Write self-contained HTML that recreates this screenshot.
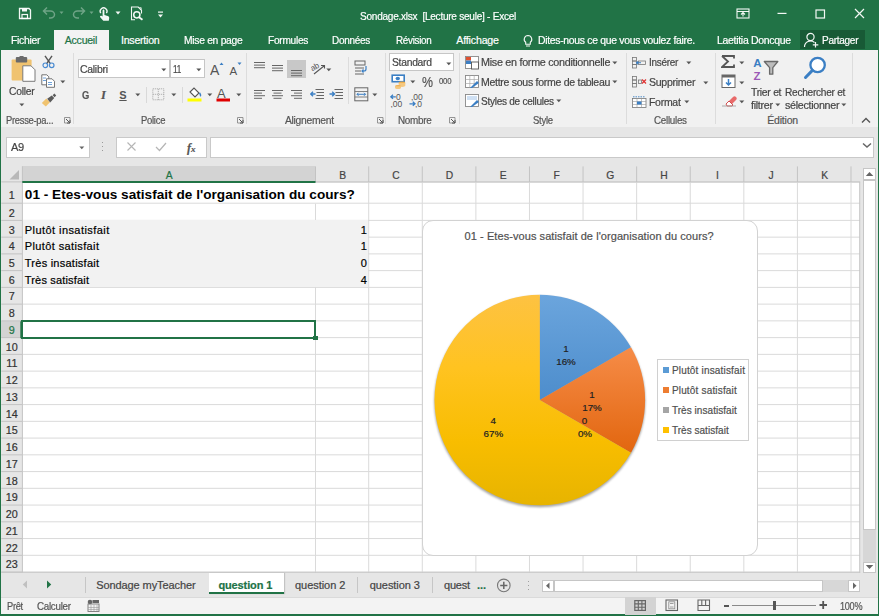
<!DOCTYPE html>
<html><head><meta charset="utf-8"><style>
*{margin:0;padding:0}
html,body{width:879px;height:616px;overflow:hidden;background:#217346;font-family:"Liberation Sans",sans-serif;}
.r{position:absolute;display:block}
.t{position:absolute;white-space:nowrap;font-family:"Liberation Sans",sans-serif;-webkit-text-stroke:0.2px currentColor;}
</style></head><body>
<svg class="r" style="left:18px;top:7px;" width="14" height="13" viewBox="0 0 14 13"><path d="M1.5 1.5h9.5l1.5 1.5v8.5h-11z" fill="none" stroke="rgba(255,255,255,0.95)" stroke-width="1.3"></path><rect x="4" y="1.5" width="5" height="3" fill="rgba(255,255,255,0.95)"></rect><rect x="4" y="7.5" width="5.5" height="4" fill="none" stroke="rgba(255,255,255,0.95)" stroke-width="1.2"></rect></svg>
<svg class="r" style="left:41px;top:4px;" width="16" height="17" viewBox="0 0 16 17"><path d="M6 3.5 L2.5 7 L6 10.5 M3 7 H9.5 A4 3.5 0 0 1 9.5 14 H8" fill="none" stroke="rgba(255,255,255,0.35)" stroke-width="1.5"></path></svg>
<svg class="r" style="left:59px;top:11px;" width="6" height="4" viewBox="0 0 6 4"><path d="M0.5 0.5h4l-2 2.5z" fill="rgba(255,255,255,0.35)"></path></svg>
<svg class="r" style="left:71px;top:4px;" width="16" height="17" viewBox="0 0 16 17"><path d="M10 3.5 L13.5 7 L10 10.5 M13 7 H6.5 A4 3.5 0 0 0 6.5 14 H8" fill="none" stroke="rgba(255,255,255,0.35)" stroke-width="1.5"></path></svg>
<svg class="r" style="left:89px;top:11px;" width="6" height="4" viewBox="0 0 6 4"><path d="M0.5 0.5h4l-2 2.5z" fill="rgba(255,255,255,0.35)"></path></svg>
<svg class="r" style="left:98px;top:5px;" width="13" height="16" viewBox="0 0 13 16"><path d="M2.8 8.2a3.4 3.4 0 1 1 5.6 0" fill="none" stroke="rgba(255,255,255,0.95)" stroke-width="1.3"></path><path d="M4.6 5.5c0-1.2 1.8-1.2 1.8 0v4.5l3.3 0.9c1 0.3 1.6 1 1.5 2l-0.4 2.8H5.3L2.2 12.2c-0.7-0.9 0.3-2 1.3-1.4l1.1 0.7z" fill="rgba(255,255,255,0.95)"></path></svg>
<svg class="r" style="left:115px;top:11px;" width="6" height="4" viewBox="0 0 6 4"><path d="M0.5 0.5h5l-2.5 3z" fill="rgba(255,255,255,0.95)"></path></svg>
<svg class="r" style="left:130px;top:6px;" width="15" height="15" viewBox="0 0 15 15"><path d="M5 13.8 H1.5 V1 H8.2 L11.5 4.3 V7.5" fill="none" stroke="rgba(255,255,255,0.95)" stroke-width="1.1"></path><path d="M9.5 1.5l1.8 0.3-0.3 1.8" fill="none" stroke="rgba(255,255,255,0.95)" stroke-width="0.8"></path><circle cx="6.8" cy="8.8" r="3.1" fill="none" stroke="rgba(255,255,255,0.95)" stroke-width="1.5"></circle><path d="M9 11.2l3.5 2.6" stroke="rgba(255,255,255,0.95)" stroke-width="1.8"></path></svg>
<svg class="r" style="left:157px;top:11px;" width="8" height="8" viewBox="0 0 8 8"><rect x="1" y="0.5" width="5" height="1.2" fill="rgba(255,255,255,0.95)"></rect><path d="M1 3.5h5l-2.5 3z" fill="rgba(255,255,255,0.95)"></path></svg>
<div class="t" style="left: 360px; top: 11.17px; font-size: 11.5px; line-height: 11.5px; color: rgb(255, 255, 255); letter-spacing: -0.3px; transform: scaleX(0.876); transform-origin: 0px 0px;">Sondage.xlsx&nbsp;&nbsp;[Lecture seule] - Excel</div>
<svg class="r" style="left:736px;top:8px;" width="14" height="11" viewBox="0 0 14 11"><rect x="1" y="1" width="12" height="9" fill="none" stroke="rgba(255,255,255,0.95)" stroke-width="1.1"></rect><path d="M1 3.5h12" stroke="rgba(255,255,255,0.95)" stroke-width="1"></path><path d="M7 4.5v4M5 6.5l2-2 2 2" fill="none" stroke="rgba(255,255,255,0.95)" stroke-width="1.1"></path></svg>
<svg class="r" style="left:777px;top:12px;" width="10" height="3" viewBox="0 0 10 3"><rect x="0.5" y="0.8" width="9" height="1.2" fill="rgba(255,255,255,0.95)"></rect></svg>
<svg class="r" style="left:815px;top:9px;" width="11" height="10" viewBox="0 0 11 10"><rect x="1" y="1" width="8.5" height="8" fill="none" stroke="rgba(255,255,255,0.95)" stroke-width="1.2"></rect></svg>
<svg class="r" style="left:854px;top:8px;" width="11" height="11" viewBox="0 0 11 11"><path d="M1 1L10 10M10 1L1 10" stroke="rgba(255,255,255,0.95)" stroke-width="1.2"></path></svg>
<div class="r" style="left:53.60px;top:30.00px;width:55.60px;height:20.00px;background:#f3f3f3;"></div>
<div class="t" style="left: 10.9px; top: 35.03px; font-size: 10.6px; line-height: 10.6px; color: rgb(255, 255, 255); letter-spacing: -0.3px; transform: scaleX(0.9804); transform-origin: 0px 0px;">Fichier</div>
<div class="t" style="left: 64.8px; top: 35.03px; font-size: 10.6px; line-height: 10.6px; color: rgb(33, 115, 70); letter-spacing: -0.276px;">Accueil</div>
<div class="t" style="left: 121px; top: 35.03px; font-size: 10.6px; line-height: 10.6px; color: rgb(255, 255, 255); letter-spacing: -0.243px;">Insertion</div>
<div class="t" style="left: 184.3px; top: 35.03px; font-size: 10.6px; line-height: 10.6px; color: rgb(255, 255, 255); letter-spacing: -0.3px; transform: scaleX(0.9732); transform-origin: 0px 0px;">Mise en page</div>
<div class="t" style="left: 267.6px; top: 35.03px; font-size: 10.6px; line-height: 10.6px; color: rgb(255, 255, 255); letter-spacing: -0.3px; transform: scaleX(0.9608); transform-origin: 0px 0px;">Formules</div>
<div class="t" style="left: 332.4px; top: 35.03px; font-size: 10.6px; line-height: 10.6px; color: rgb(255, 255, 255); letter-spacing: -0.3px; transform: scaleX(0.9406); transform-origin: 0px 0px;">Données</div>
<div class="t" style="left: 395.6px; top: 35.03px; font-size: 10.6px; line-height: 10.6px; color: rgb(255, 255, 255); letter-spacing: -0.3px; transform: scaleX(0.929); transform-origin: 0px 0px;">Révision</div>
<div class="t" style="left: 456.3px; top: 35.03px; font-size: 10.6px; line-height: 10.6px; color: rgb(255, 255, 255); letter-spacing: -0.161px;">Affichage</div>
<svg class="r" style="left:522px;top:34px;" width="12" height="13" viewBox="0 0 12 13"><path d="M6 1.5a3.8 3.8 0 0 0-2.3 6.8v2h4.6v-2A3.8 3.8 0 0 0 6 1.5z" fill="none" stroke="rgba(255,255,255,0.95)" stroke-width="1.1"></path><path d="M4 12h4" stroke="rgba(255,255,255,0.95)" stroke-width="1"></path></svg>
<div class="t" style="left: 537.9px; top: 35.03px; font-size: 10.6px; line-height: 10.6px; color: rgb(255, 255, 255); letter-spacing: -0.3px; transform: scaleX(0.9802); transform-origin: 0px 0px;">Dites-nous ce que vous voulez faire.</div>
<div class="t" style="left: 716.7px; top: 35.03px; font-size: 10.6px; line-height: 10.6px; color: rgb(255, 255, 255); letter-spacing: -0.3px; transform: scaleX(0.9891); transform-origin: 0px 0px;">Laetitia Doncque</div>
<div class="r" style="left:799.70px;top:30.10px;width:65.00px;height:19.40px;background:#185a36;"></div>
<svg class="r" style="left:803px;top:32px;" width="17" height="16" viewBox="0 0 17 16"><circle cx="7.5" cy="5" r="3.6" fill="none" stroke="rgba(255,255,255,0.95)" stroke-width="1.2"></circle><path d="M1.5 15a6 6 0 0 1 10-4.5" fill="none" stroke="rgba(255,255,255,0.95)" stroke-width="1.2"></path><path d="M12.5 10v5.5M9.8 12.8h5.5" stroke="rgba(255,255,255,0.95)" stroke-width="1.2"></path></svg>
<div class="t" style="left: 821.5px; top: 35.03px; font-size: 10.6px; line-height: 10.6px; color: rgb(255, 255, 255); letter-spacing: -0.3px; transform: scaleX(0.9472); transform-origin: 0px 0px;">Partager</div>
<div class="r" style="left:1.30px;top:50.00px;width:876.40px;height:77.30px;background:#f1f1f1;"></div>
<div class="r" style="left:1.30px;top:126.80px;width:876.40px;height:1.00px;background:#dadada;"></div>
<div class="r" style="left:73.00px;top:53.00px;width:1.00px;height:71.00px;background:#dcdcdc;"></div>
<div class="r" style="left:246.00px;top:53.00px;width:1.00px;height:71.00px;background:#dcdcdc;"></div>
<div class="r" style="left:384.50px;top:53.00px;width:1.00px;height:71.00px;background:#dcdcdc;"></div>
<div class="r" style="left:458.50px;top:53.00px;width:1.00px;height:71.00px;background:#dcdcdc;"></div>
<div class="r" style="left:626.00px;top:53.00px;width:1.00px;height:71.00px;background:#dcdcdc;"></div>
<div class="r" style="left:715.30px;top:53.00px;width:1.00px;height:71.00px;background:#dcdcdc;"></div>
<div class="r" style="left:851.50px;top:53.00px;width:1.00px;height:71.00px;background:#dcdcdc;"></div>
<div class="r" style="left:347.80px;top:57.00px;width:1.00px;height:47.00px;background:#dcdcdc;"></div>
<div class="t" style="left: 6.3px; top: 115.11px; font-size: 10.5px; line-height: 10.5px; color: rgb(85, 85, 85); letter-spacing: -0.3px; transform: scaleX(0.8909); transform-origin: 0px 0px;">Presse-pa...</div>
<div class="t" style="left: 140.6px; top: 115.11px; font-size: 10.5px; line-height: 10.5px; color: rgb(85, 85, 85); letter-spacing: -0.3px; transform: scaleX(0.9); transform-origin: 0px 0px;">Police</div>
<div class="t" style="left: 285px; top: 115.11px; font-size: 10.5px; line-height: 10.5px; color: rgb(85, 85, 85); letter-spacing: -0.3px; transform: scaleX(0.9833); transform-origin: 0px 0px;">Alignement</div>
<div class="t" style="left: 397.7px; top: 115.11px; font-size: 10.5px; line-height: 10.5px; color: rgb(85, 85, 85); letter-spacing: -0.3px; transform: scaleX(0.9429); transform-origin: 0px 0px;">Nombre</div>
<div class="t" style="left: 532.6px; top: 115.11px; font-size: 10.5px; line-height: 10.5px; color: rgb(85, 85, 85); letter-spacing: -0.3px; transform: scaleX(0.9032); transform-origin: 0px 0px;">Style</div>
<div class="t" style="left: 654px; top: 115.11px; font-size: 10.5px; line-height: 10.5px; color: rgb(85, 85, 85); letter-spacing: -0.3px; transform: scaleX(0.9361); transform-origin: 0px 0px;">Cellules</div>
<div class="t" style="left: 767.3px; top: 115.11px; font-size: 10.5px; line-height: 10.5px; color: rgb(85, 85, 85); letter-spacing: -0.202px;">Édition</div>
<svg class="r" style="left:63.5px;top:117px;" width="7" height="7" viewBox="0 0 7 7"><path d="M0.5 0.5h5.5v5.5h-5.5z" fill="none" stroke="#8a8a8a" stroke-width="0.9"></path><path d="M2 2l4 4M6 3v3h-3" fill="none" stroke="#555" stroke-width="1"></path></svg>
<svg class="r" style="left:236.5px;top:117px;" width="7" height="7" viewBox="0 0 7 7"><path d="M0.5 0.5h5.5v5.5h-5.5z" fill="none" stroke="#8a8a8a" stroke-width="0.9"></path><path d="M2 2l4 4M6 3v3h-3" fill="none" stroke="#555" stroke-width="1"></path></svg>
<svg class="r" style="left:376.5px;top:117px;" width="7" height="7" viewBox="0 0 7 7"><path d="M0.5 0.5h5.5v5.5h-5.5z" fill="none" stroke="#8a8a8a" stroke-width="0.9"></path><path d="M2 2l4 4M6 3v3h-3" fill="none" stroke="#555" stroke-width="1"></path></svg>
<svg class="r" style="left:448.5px;top:117px;" width="7" height="7" viewBox="0 0 7 7"><path d="M0.5 0.5h5.5v5.5h-5.5z" fill="none" stroke="#8a8a8a" stroke-width="0.9"></path><path d="M2 2l4 4M6 3v3h-3" fill="none" stroke="#555" stroke-width="1"></path></svg>
<svg class="r" style="left:861px;top:117px;" width="10" height="7" viewBox="0 0 10 7"><path d="M1 5.5l4-4 4 4" fill="none" stroke="#555" stroke-width="1.4"></path></svg>
<svg class="r" style="left:11px;top:56px;" width="26" height="27" viewBox="0 0 26 27"><rect x="0.6" y="3.5" width="20" height="21" rx="1" fill="#f0c370"></rect><rect x="4.8" y="1" width="11.4" height="5.5" rx="1" fill="#6b6b6b"></rect><rect x="8.3" y="0" width="4.5" height="2.5" rx="1" fill="#6b6b6b"></rect><path d="M11.8 9.8h8.2l4 4v11.5h-12.2z" fill="#fff" stroke="#7a7a7a" stroke-width="1"></path></svg>
<div class="t" style="left: 8.6px; top: 85.82px; font-size: 11.2px; line-height: 11.2px; color: rgb(68, 68, 68); letter-spacing: -0.3px; transform: scaleX(0.9235); transform-origin: 0px 0px;">Coller</div>
<svg class="r" style="left:18.8px;top:103px;" width="6" height="4" viewBox="0 0 6 4"><path d="M0.3 0.5h5l-2.5 2.8z" fill="#555"></path></svg>
<svg class="r" style="left:41px;top:55px;" width="15" height="14" viewBox="0 0 15 14"><path d="M4 0.8l5.5 8M11 0.8l-5.5 8" stroke="#555" stroke-width="1.4"></path><circle cx="4.3" cy="10.3" r="2.3" fill="none" stroke="#4a8bd1" stroke-width="1.2"></circle><circle cx="10.7" cy="10.3" r="2.3" fill="none" stroke="#4a8bd1" stroke-width="1.2"></circle></svg>
<svg class="r" style="left:41px;top:74px;" width="15" height="14" viewBox="0 0 15 14"><path d="M0.8 0.8h5l2 2v8h-7z" fill="#fff" stroke="#666" stroke-width="0.9"></path><path d="M5.5 4.8h5.5l2.5 2.5v6h-8z" fill="#fff" stroke="#666" stroke-width="0.9"></path><path d="M2 4h3M2 6.5h3M7 8.5h4M7 10.5h4" stroke="#4a8bd1" stroke-width="0.8"></path></svg>
<svg class="r" style="left:60px;top:80px;" width="6" height="4" viewBox="0 0 6 4"><path d="M0.3 0.5h5l-2.5 2.8z" fill="#555"></path></svg>
<svg class="r" style="left:41px;top:93px;" width="16" height="14" viewBox="0 0 16 14"><path d="M0.8 10 L5.3 5.6 L9 9.3 L4.8 13.6 Z" fill="#f0c370"></path><path d="M6.2 5.8 L10.8 2.6 L13.2 5 L9.2 9.5 Z" fill="#5a5a5a"></path><path d="M11.6 2.2 L13.4 0.6 L15.2 2.4 L13.6 4.2Z" fill="#5a5a5a"></path></svg>
<div class="r" style="left:77.60px;top:59.20px;width:92.40px;height:19.10px;background:#fff;box-sizing:border-box;border:1px solid #c6c6c6;"></div>
<div class="r" style="left:170.30px;top:59.20px;width:35.00px;height:19.10px;background:#fff;box-sizing:border-box;border:1px solid #c6c6c6;"></div>
<div class="t" style="left: 79.8px; top: 64.09px; font-size: 11px; line-height: 11px; color: rgb(68, 68, 68); letter-spacing: -0.3px; transform: scaleX(0.9531); transform-origin: 0px 0px;">Calibri</div>
<svg class="r" style="left:161px;top:67.5px;" width="6" height="4" viewBox="0 0 6 4"><path d="M0.3 0.5h5l-2.5 2.8z" fill="#555"></path></svg>
<div class="t" style="left: 173.4px; top: 64.09px; font-size: 11px; line-height: 11px; color: rgb(68, 68, 68); letter-spacing: -0.3px; transform: scaleX(0.7369); transform-origin: 0px 0px;">11</div>
<svg class="r" style="left:196px;top:67.5px;" width="6" height="4" viewBox="0 0 6 4"><path d="M0.3 0.5h5l-2.5 2.8z" fill="#555"></path></svg>
<svg class="r" style="left:210px;top:61px;" width="14" height="15" viewBox="0 0 14 15"><text x="0" y="13.5" font-family="Liberation Sans" font-size="14" fill="#555">A</text><path d="M9.5 4l2-2.5 2 2.5z" fill="#3b7fc4"></path></svg>
<svg class="r" style="left:229px;top:61px;" width="13" height="15" viewBox="0 0 13 15"><text x="0.5" y="13.5" font-family="Liberation Sans" font-size="11.5" fill="#555">A</text><path d="M8.5 1.5h4l-2 2.5z" fill="#3b7fc4"></path></svg>
<div class="t" style="left: 82px; top: 90.09px; font-size: 11px; line-height: 11px; color: rgb(85, 85, 85); font-weight: bold; transform: scaleX(0.8526); transform-origin: 0px 0px;">G</div>
<div class="t " style="left:101.00px;top:89.12px;font-size:12.5px;line-height:12.5px;color:#555;font-family:'Liberation Serif',serif;font-weight:bold;"><i>I</i></div>
<div class="t " style="left:119.30px;top:90.09px;font-size:11px;line-height:11px;color:#555;font-weight:bold;-webkit-text-stroke:0;"><u>S</u></div>
<svg class="r" style="left:134.5px;top:93px;" width="6" height="4" viewBox="0 0 6 4"><path d="M0.3 0.5h5l-2.5 2.8z" fill="#555"></path></svg>
<div class="r" style="left:145.50px;top:87.00px;width:1.00px;height:16.00px;background:#d9d9d9;"></div>
<svg class="r" style="left:152px;top:88px;" width="13" height="13" viewBox="0 0 13 13"><rect x="0.8" y="0.8" width="11" height="11" fill="none" stroke="#aaa" stroke-width="0.9" stroke-dasharray="1.2 0.8"></rect><path d="M6.3 1v11M1 6.3h11" stroke="#aaa" stroke-width="0.9" stroke-dasharray="1.2 0.8"></path></svg>
<svg class="r" style="left:170.5px;top:93px;" width="6" height="4" viewBox="0 0 6 4"><path d="M0.3 0.5h5l-2.5 2.8z" fill="#555"></path></svg>
<div class="r" style="left:181.50px;top:87.00px;width:1.00px;height:16.00px;background:#d9d9d9;"></div>
<svg class="r" style="left:187px;top:86px;" width="16" height="16" viewBox="0 0 16 16"><path d="M3 6l4-4 5 5-4 4z" fill="#fff" stroke="#555" stroke-width="1.1"></path><path d="M12.5 7c1 1.5 1.5 2.5 0.5 3" fill="none" stroke="#3b7fc4" stroke-width="1.5"></path><rect x="0.5" y="12.5" width="14" height="3" fill="#ffff00"></rect></svg>
<svg class="r" style="left:206.5px;top:93px;" width="6" height="4" viewBox="0 0 6 4"><path d="M0.3 0.5h5l-2.5 2.8z" fill="#555"></path></svg>
<svg class="r" style="left:216px;top:86px;" width="15" height="16" viewBox="0 0 15 16"><text x="1" y="11.5" font-family="Liberation Sans" font-size="13" fill="#555">A</text><rect x="0.5" y="12.5" width="13.5" height="3" fill="#e00000"></rect></svg>
<svg class="r" style="left:235.5px;top:93px;" width="6" height="4" viewBox="0 0 6 4"><path d="M0.3 0.5h5l-2.5 2.8z" fill="#555"></path></svg>
<svg class="r" style="left:254px;top:62px;" width="16" height="16" viewBox="0 0 16 16"><rect x="0" y="0.0" width="11" height="1" fill="#666"></rect><rect x="0" y="2.6" width="11" height="1" fill="#666"></rect><rect x="0" y="5.2" width="11" height="1" fill="#666"></rect></svg>
<svg class="r" style="left:272px;top:65px;" width="16" height="16" viewBox="0 0 16 16"><rect x="0" y="0.0" width="11" height="1" fill="#666"></rect><rect x="0" y="2.6" width="11" height="1" fill="#666"></rect><rect x="0" y="5.2" width="11" height="1" fill="#666"></rect></svg>
<div class="r" style="left:287.00px;top:59.50px;width:18.60px;height:18.80px;background:#c8c8c8;"></div>
<svg class="r" style="left:290.5px;top:69.5px;" width="16" height="16" viewBox="0 0 16 16"><rect x="0" y="0.0" width="11" height="1" fill="#666"></rect><rect x="0" y="2.6" width="11" height="1" fill="#666"></rect><rect x="0" y="5.2" width="11" height="1" fill="#666"></rect></svg>
<svg class="r" style="left:311px;top:60px;" width="22" height="16" viewBox="0 0 22 16"><text x="0" y="9" font-family="Liberation Sans" font-size="8" fill="#555" transform="rotate(-30 5 8)">ab</text><path d="M3 14l10-8M10 5.5h3.5v3" fill="none" stroke="#555" stroke-width="1.1"></path></svg>
<svg class="r" style="left:326px;top:68px;" width="6" height="4" viewBox="0 0 6 4"><path d="M0.3 0.5h5l-2.5 2.8z" fill="#555"></path></svg>
<svg class="r" style="left:254px;top:90px;" width="16" height="16" viewBox="0 0 16 16"><rect x="0" y="0.0" width="11" height="1" fill="#666"></rect><rect x="0" y="2.6" width="8" height="1" fill="#666"></rect><rect x="0" y="5.2" width="11" height="1" fill="#666"></rect><rect x="0" y="7.800000000000001" width="8" height="1" fill="#666"></rect></svg>
<svg class="r" style="left:272px;top:90px;" width="16" height="16" viewBox="0 0 16 16"><rect x="0" y="0.0" width="11" height="1" fill="#666"></rect><rect x="1.5" y="2.6" width="8" height="1" fill="#666"></rect><rect x="0" y="5.2" width="11" height="1" fill="#666"></rect><rect x="1.5" y="7.800000000000001" width="8" height="1" fill="#666"></rect></svg>
<svg class="r" style="left:291px;top:90px;" width="16" height="16" viewBox="0 0 16 16"><rect x="0" y="0.0" width="11" height="1" fill="#666"></rect><rect x="3" y="2.6" width="8" height="1" fill="#666"></rect><rect x="0" y="5.2" width="11" height="1" fill="#666"></rect><rect x="3" y="7.800000000000001" width="8" height="1" fill="#666"></rect></svg>
<svg class="r" style="left:310px;top:89px;" width="15" height="12" viewBox="0 0 15 12"><path d="M5.5 0.5h8.5M6.5 3.5h7.5M6.5 6.5h7.5M5.5 9.5h8.5" stroke="#666" stroke-width="1"></path><path d="M0.5 5h5M3 2.8L0.7 5 3 7.2" fill="none" stroke="#3b7fc4" stroke-width="1.4"></path></svg>
<svg class="r" style="left:329px;top:89px;" width="15" height="12" viewBox="0 0 15 12"><path d="M5.5 0.5h8.5M6.5 3.5h7.5M6.5 6.5h7.5M5.5 9.5h8.5" stroke="#666" stroke-width="1"></path><path d="M0.5 5h5M3.2 2.8L5.5 5 3.2 7.2" fill="none" stroke="#3b7fc4" stroke-width="1.4"></path></svg>
<svg class="r" style="left:354px;top:60px;" width="16" height="16" viewBox="0 0 16 16"><rect x="1" y="1" width="10" height="4" fill="none" stroke="#666" stroke-width="1"></rect><path d="M1 8h9M1 11h6M1 14h9" stroke="#666" stroke-width="1"></path><path d="M12 6v3a2 2 0 0 1-2 2h-2M9.5 9.5l-1.5 1.5 1.5 1.5" fill="none" stroke="#3b7fc4" stroke-width="1.2"></path></svg>
<svg class="r" style="left:354px;top:87px;" width="15" height="15" viewBox="0 0 15 15"><rect x="0.8" y="0.8" width="13" height="13" fill="none" stroke="#666" stroke-width="1"></rect><path d="M0.8 4.5h13M0.8 10h13" stroke="#666" stroke-width="0.8"></path><path d="M3 7.3h8.5M4.5 5.8L3 7.3 4.5 8.8M10 5.8l1.5 1.5L10 8.8" fill="none" stroke="#3b7fc4" stroke-width="1"></path></svg>
<svg class="r" style="left:372px;top:93px;" width="6" height="4" viewBox="0 0 6 4"><path d="M0.3 0.5h5l-2.5 2.8z" fill="#555"></path></svg>
<div class="r" style="left:389.40px;top:53.30px;width:65.10px;height:18.00px;background:#fff;box-sizing:border-box;border:1px solid #c6c6c6;"></div>
<div class="t" style="left: 392px; top: 56.89px; font-size: 11px; line-height: 11px; color: rgb(68, 68, 68); letter-spacing: -0.3px; transform: scaleX(0.9401); transform-origin: 0px 0px;">Standard</div>
<svg class="r" style="left:446px;top:61.5px;" width="6" height="4" viewBox="0 0 6 4"><path d="M0.3 0.5h5l-2.5 2.8z" fill="#555"></path></svg>
<svg class="r" style="left:391px;top:74px;" width="16" height="15" viewBox="0 0 16 15"><rect x="1.2" y="1.2" width="12" height="6.5" fill="#fff" stroke="#3b7fc4" stroke-width="1.6"></rect><ellipse cx="6.8" cy="4.5" rx="2.2" ry="1.8" fill="#3b7fc4"></ellipse><ellipse cx="11" cy="9" rx="3.3" ry="1.4" fill="#f0b050"></ellipse><path d="M7.7 9v2.5a3.3 1.4 0 0 0 6.6 0V9" fill="#f5c880"></path><ellipse cx="7" cy="12.3" rx="3" ry="1.3" fill="#f0b050"></ellipse><path d="M4 12.3v1.5a3 1.3 0 0 0 6 0v-1.5" fill="#f5c880"></path></svg>
<svg class="r" style="left:409.5px;top:79.5px;" width="6" height="4" viewBox="0 0 6 4"><path d="M0.3 0.5h5l-2.5 2.8z" fill="#555"></path></svg>
<div class="t" style="left: 421.5px; top: 75.05px; font-size: 14px; line-height: 14px; color: rgb(85, 85, 85); transform: scaleX(0.8833); transform-origin: 0px 0px;">%</div>
<div class="t" style="left: 439px; top: 76.36px; font-size: 9.5px; line-height: 9.5px; color: rgb(85, 85, 85); letter-spacing: -0.3px; transform: scaleX(0.8195); transform-origin: 0px 0px;">000</div>
<svg class="r" style="left:390px;top:93px;" width="16" height="15" viewBox="0 0 16 15"><text x="6" y="7" font-family="Liberation Sans" font-size="8.5" fill="#555">0</text><text x="0.5" y="14" font-family="Liberation Sans" font-size="8.5" fill="#555">,00</text><path d="M0.8 3.8h5M3 1.8L0.8 3.8 3 5.8" fill="none" stroke="#3b7fc4" stroke-width="1.3"></path></svg>
<svg class="r" style="left:409px;top:93px;" width="16" height="15" viewBox="0 0 16 15"><text x="2" y="7" font-family="Liberation Sans" font-size="8.5" fill="#555">,00</text><text x="6" y="14" font-family="Liberation Sans" font-size="8.5" fill="#555">,0</text><path d="M0.5 10.8h5.5M3.8 8.8L6 10.8 3.8 12.8" fill="none" stroke="#3b7fc4" stroke-width="1.3"></path></svg>
<svg class="r" style="left:464.5px;top:55.5px;" width="15" height="14" viewBox="0 0 15 14"><rect x="0.5" y="0.5" width="13" height="12" fill="#fff" stroke="#888" stroke-width="0.9"></rect><rect x="1" y="1" width="5" height="3.5" fill="#e05030"></rect><rect x="1" y="4.5" width="5" height="3.5" fill="#3b7fc4"></rect><rect x="6.5" y="6" width="7" height="7" fill="#fff" stroke="#555" stroke-width="0.9"></rect></svg>
<svg class="r" style="left:464.5px;top:75px;" width="15" height="14" viewBox="0 0 15 14"><rect x="0.5" y="0.5" width="13" height="12" fill="#fff" stroke="#888" stroke-width="0.9"></rect><path d="M0.5 4.5h13M0.5 8.5h13M4.8 0.5v12M9.2 0.5v12" stroke="#aaa" stroke-width="0.7"></path><path d="M5 13l7-7 2 2-7 5z" fill="#3b7fc4"></path></svg>
<svg class="r" style="left:464.5px;top:94px;" width="15" height="14" viewBox="0 0 15 14"><rect x="0.5" y="0.5" width="13" height="12" fill="#fff" stroke="#888" stroke-width="0.9"></rect><rect x="2" y="2" width="10" height="4" fill="#cfe0f3"></rect><path d="M5 13l7-7 2 2-7 5z" fill="#3b7fc4"></path></svg>
<div class="t" style="left: 480.8px; top: 57.09px; font-size: 11px; line-height: 11px; color: rgb(68, 68, 68); letter-spacing: -0.3px; transform: scaleX(0.9809); transform-origin: 0px 0px;">Mise en forme conditionnelle</div>
<svg class="r" style="left:612px;top:60.5px;" width="6" height="4" viewBox="0 0 6 4"><path d="M0.3 0.5h5l-2.5 2.8z" fill="#555"></path></svg>
<div class="t" style="left: 480.8px; top: 76.59px; font-size: 11px; line-height: 11px; color: rgb(68, 68, 68); letter-spacing: -0.3px; transform: scaleX(0.9586); transform-origin: 0px 0px;">Mettre sous forme de tableau</div>
<svg class="r" style="left:612px;top:80px;" width="6" height="4" viewBox="0 0 6 4"><path d="M0.3 0.5h5l-2.5 2.8z" fill="#555"></path></svg>
<div class="t" style="left: 480.8px; top: 95.59px; font-size: 11px; line-height: 11px; color: rgb(68, 68, 68); letter-spacing: -0.3px; transform: scaleX(0.915); transform-origin: 0px 0px;">Styles de cellules</div>
<svg class="r" style="left:556px;top:99px;" width="6" height="4" viewBox="0 0 6 4"><path d="M0.3 0.5h5l-2.5 2.8z" fill="#555"></path></svg>
<svg class="r" style="left:632.4px;top:56.5px;" width="15" height="12" viewBox="0 0 15 12"><rect x="0.5" y="0.5" width="4" height="3.5" fill="none" stroke="#777" stroke-width="0.8"></rect><rect x="0.5" y="4" width="4" height="3.5" fill="none" stroke="#777" stroke-width="0.8"></rect><rect x="0.5" y="7.5" width="4" height="3.5" fill="none" stroke="#777" stroke-width="0.8"></rect><rect x="6.5" y="4" width="7" height="3.5" fill="none" stroke="#777" stroke-width="0.8"></rect><path d="M4 5.8h5M6 4.3L4.5 5.8 6 7.3" fill="none" stroke="#3b7fc4" stroke-width="1.1"></path></svg>
<svg class="r" style="left:632.4px;top:76px;" width="15" height="12" viewBox="0 0 15 12"><rect x="0.5" y="0.5" width="4" height="3.5" fill="none" stroke="#777" stroke-width="0.8"></rect><rect x="0.5" y="4" width="4" height="3.5" fill="none" stroke="#777" stroke-width="0.8"></rect><rect x="0.5" y="7.5" width="4" height="3.5" fill="none" stroke="#777" stroke-width="0.8"></rect><rect x="6.5" y="4" width="3" height="3.5" fill="none" stroke="#777" stroke-width="0.8"></rect><path d="M10 3.5l4 4M14 3.5l-4 4" stroke="#e03030" stroke-width="1.2"></path></svg>
<svg class="r" style="left:632.4px;top:95.5px;" width="15" height="12" viewBox="0 0 15 12"><rect x="0.5" y="2.5" width="13.5" height="9" fill="#fff" stroke="#777" stroke-width="0.8"></rect><path d="M0.5 5.5h13.5M0.5 8.5h13.5M5 2.5v9M9.5 2.5v9" stroke="#999" stroke-width="0.6"></path><rect x="5" y="5.5" width="4.5" height="3" fill="#3b7fc4"></rect><path d="M1 0.8h12.5" stroke="#3b7fc4" stroke-width="0.9" stroke-dasharray="1.5 1"></path></svg>
<div class="t" style="left: 648.6px; top: 57.39px; font-size: 11px; line-height: 11px; color: rgb(68, 68, 68); letter-spacing: -0.3px; transform: scaleX(0.9063); transform-origin: 0px 0px;">Insérer</div>
<svg class="r" style="left:685.5px;top:61px;" width="6" height="4" viewBox="0 0 6 4"><path d="M0.3 0.5h5l-2.5 2.8z" fill="#555"></path></svg>
<div class="t" style="left: 648.6px; top: 76.79px; font-size: 11px; line-height: 11px; color: rgb(68, 68, 68); letter-spacing: -0.3px; transform: scaleX(0.9597); transform-origin: 0px 0px;">Supprimer</div>
<svg class="r" style="left:702.5px;top:80.5px;" width="6" height="4" viewBox="0 0 6 4"><path d="M0.3 0.5h5l-2.5 2.8z" fill="#555"></path></svg>
<div class="t" style="left: 648.6px; top: 96.59px; font-size: 11px; line-height: 11px; color: rgb(68, 68, 68); letter-spacing: -0.3px; transform: scaleX(0.9536); transform-origin: 0px 0px;">Format</div>
<svg class="r" style="left:683.5px;top:100px;" width="6" height="4" viewBox="0 0 6 4"><path d="M0.3 0.5h5l-2.5 2.8z" fill="#555"></path></svg>
<svg class="r" style="left:721px;top:55px;" width="16" height="14" viewBox="0 0 16 14"><path d="M1 1h12v2.5M1 1l6 5.5L1 12h12v-2.5" fill="none" stroke="#555" stroke-width="1.8"></path></svg>
<svg class="r" style="left:738.5px;top:60.5px;" width="6" height="4" viewBox="0 0 6 4"><path d="M0.3 0.5h5l-2.5 2.8z" fill="#555"></path></svg>
<svg class="r" style="left:721px;top:74px;" width="16" height="15" viewBox="0 0 16 15"><rect x="1" y="1" width="13" height="12.5" fill="#fff" stroke="#666" stroke-width="1"></rect><rect x="1" y="1" width="13" height="2.5" fill="#666"></rect><path d="M7.5 5v6M5 8.5l2.5 2.5 2.5-2.5" fill="none" stroke="#3b7fc4" stroke-width="1.5"></path></svg>
<svg class="r" style="left:739px;top:80.5px;" width="6" height="4" viewBox="0 0 6 4"><path d="M0.3 0.5h5l-2.5 2.8z" fill="#555"></path></svg>
<svg class="r" style="left:721px;top:93px;" width="16" height="14" viewBox="0 0 16 14"><path d="M5 11l7-7c1-1 2-1 3 0s1 2 0 3l-5 5z" fill="#e86a6a"></path><path d="M5 11l3-3 4 4-1 1H6z" fill="#fff" stroke="#d04040" stroke-width="0.9"></path><path d="M1 13h14" stroke="#999" stroke-width="0.8"></path></svg>
<svg class="r" style="left:739px;top:99.5px;" width="6" height="4" viewBox="0 0 6 4"><path d="M0.3 0.5h5l-2.5 2.8z" fill="#555"></path></svg>
<svg class="r" style="left:751px;top:56px;" width="30" height="26" viewBox="0 0 30 26"><text x="2.3" y="11" font-family="Liberation Sans" font-size="11.5" font-weight="bold" fill="#3b7fc4">A</text><text x="2.5" y="23.5" font-family="Liberation Sans" font-size="11.5" font-weight="bold" fill="#9b59b6">Z</text><path d="M13.3 5.5h13.5l-5 6.2v6.5h-3.2v-6.5z" fill="#bdbdbd" stroke="#6a6a6a" stroke-width="1.3" stroke-linejoin="round"></path></svg>
<div class="t" style="left: 751px; top: 87.09px; font-size: 11px; line-height: 11px; color: rgb(68, 68, 68); letter-spacing: -0.3px; transform: scaleX(0.9434); transform-origin: 0px 0px;">Trier et</div>
<div class="t" style="left: 751px; top: 99.89px; font-size: 11px; line-height: 11px; color: rgb(68, 68, 68); letter-spacing: -0.3px; transform: scaleX(0.9709); transform-origin: 0px 0px;">filtrer</div>
<svg class="r" style="left:775.3px;top:103.3px;" width="6" height="4" viewBox="0 0 6 4"><path d="M0.3 0.5h5l-2.5 2.8z" fill="#555"></path></svg>
<svg class="r" style="left:800px;top:55px;" width="28" height="26" viewBox="0 0 28 26"><circle cx="17.6" cy="10" r="7.2" fill="#fff" stroke="#3b7fc4" stroke-width="2.3"></circle><path d="M12.4 15.4L5.5 22.5" stroke="#3b7fc4" stroke-width="3" stroke-linecap="round"></path></svg>
<div class="t" style="left: 785px; top: 87.09px; font-size: 11px; line-height: 11px; color: rgb(68, 68, 68); letter-spacing: -0.3px; transform: scaleX(0.9221); transform-origin: 0px 0px;">Rechercher et</div>
<div class="t" style="left: 785px; top: 99.89px; font-size: 11px; line-height: 11px; color: rgb(68, 68, 68); letter-spacing: -0.3px; transform: scaleX(0.9729); transform-origin: 0px 0px;">sélectionner</div>
<svg class="r" style="left:841px;top:103.3px;" width="6" height="4" viewBox="0 0 6 4"><path d="M0.3 0.5h5l-2.5 2.8z" fill="#555"></path></svg>
<div class="r" style="left:1.30px;top:127.30px;width:876.40px;height:445.80px;background:#e6e6e6;"></div>
<div class="r" style="left:6.00px;top:136.50px;width:84.30px;height:21.50px;background:#fff;box-sizing:border-box;border:1px solid #c9c9c9;"></div>
<div class="t" style="left: 11.2px; top: 142.47px; font-size: 11.5px; line-height: 11.5px; color: rgb(68, 68, 68); letter-spacing: -0.3px; transform: scaleX(0.966); transform-origin: 0px 0px;">A9</div>
<svg class="r" style="left:78.5px;top:145.5px;" width="6" height="4" viewBox="0 0 6 4"><path d="M0.3 0.5h5l-2.5 2.8z" fill="#666"></path></svg>
<div class="r" style="left:102.30px;top:142.00px;width:1.20px;height:1.20px;background:#9a9a9a;"></div>
<div class="r" style="left:102.30px;top:146.00px;width:1.20px;height:1.20px;background:#9a9a9a;"></div>
<div class="r" style="left:102.30px;top:150.00px;width:1.20px;height:1.20px;background:#9a9a9a;"></div>
<div class="r" style="left:115.70px;top:136.50px;width:91.70px;height:21.50px;background:#fff;box-sizing:border-box;border:1px solid #c9c9c9;"></div>
<svg class="r" style="left:126px;top:141px;" width="11" height="11" viewBox="0 0 11 11"><path d="M1.5 1.5l8 8M9.5 1.5l-8 8" stroke="#b5b5b5" stroke-width="1.1"></path></svg>
<svg class="r" style="left:155px;top:141px;" width="12" height="11" viewBox="0 0 12 11"><path d="M1 6l3.5 3.5L11 2" fill="none" stroke="#b5b5b5" stroke-width="1.2"></path></svg>
<div class="t " style="left:187.00px;top:141.74px;font-size:12px;line-height:12px;color:#555;font-family:'Liberation Serif',serif;font-weight:bold;"><i>f</i><i style="font-size:9px">x</i></div>
<div class="r" style="left:210.20px;top:136.50px;width:663.40px;height:21.50px;background:#fff;box-sizing:border-box;border:1px solid #c9c9c9;"></div>
<svg class="r" style="left:862px;top:142px;" width="10" height="7" viewBox="0 0 10 7"><path d="M1 1.5l4 3.5 4-3.5" fill="none" stroke="#666" stroke-width="1.5"></path></svg>
<div class="r" style="left:22.30px;top:182.50px;width:837.90px;height:390.30px;background:#fff;"></div>
<svg class="r" style="left:0;top:0" width="879" height="616"><line x1="22.3" y1="203.20" x2="860.2" y2="203.20" stroke="#dadada" stroke-width="1"></line><line x1="22.3" y1="220.40" x2="860.2" y2="220.40" stroke="#dadada" stroke-width="1"></line><line x1="22.3" y1="237.15" x2="860.2" y2="237.15" stroke="#dadada" stroke-width="1"></line><line x1="22.3" y1="253.89" x2="860.2" y2="253.89" stroke="#dadada" stroke-width="1"></line><line x1="22.3" y1="270.63" x2="860.2" y2="270.63" stroke="#dadada" stroke-width="1"></line><line x1="22.3" y1="287.38" x2="860.2" y2="287.38" stroke="#dadada" stroke-width="1"></line><line x1="22.3" y1="304.12" x2="860.2" y2="304.12" stroke="#dadada" stroke-width="1"></line><line x1="22.3" y1="320.87" x2="860.2" y2="320.87" stroke="#dadada" stroke-width="1"></line><line x1="22.3" y1="337.62" x2="860.2" y2="337.62" stroke="#dadada" stroke-width="1"></line><line x1="22.3" y1="354.36" x2="860.2" y2="354.36" stroke="#dadada" stroke-width="1"></line><line x1="22.3" y1="371.11" x2="860.2" y2="371.11" stroke="#dadada" stroke-width="1"></line><line x1="22.3" y1="387.85" x2="860.2" y2="387.85" stroke="#dadada" stroke-width="1"></line><line x1="22.3" y1="404.60" x2="860.2" y2="404.60" stroke="#dadada" stroke-width="1"></line><line x1="22.3" y1="421.34" x2="860.2" y2="421.34" stroke="#dadada" stroke-width="1"></line><line x1="22.3" y1="438.09" x2="860.2" y2="438.09" stroke="#dadada" stroke-width="1"></line><line x1="22.3" y1="454.83" x2="860.2" y2="454.83" stroke="#dadada" stroke-width="1"></line><line x1="22.3" y1="471.58" x2="860.2" y2="471.58" stroke="#dadada" stroke-width="1"></line><line x1="22.3" y1="488.32" x2="860.2" y2="488.32" stroke="#dadada" stroke-width="1"></line><line x1="22.3" y1="505.07" x2="860.2" y2="505.07" stroke="#dadada" stroke-width="1"></line><line x1="22.3" y1="521.81" x2="860.2" y2="521.81" stroke="#dadada" stroke-width="1"></line><line x1="22.3" y1="538.56" x2="860.2" y2="538.56" stroke="#dadada" stroke-width="1"></line><line x1="22.3" y1="555.30" x2="860.2" y2="555.30" stroke="#dadada" stroke-width="1"></line><line x1="22.3" y1="572.05" x2="860.2" y2="572.05" stroke="#dadada" stroke-width="1"></line><line x1="315.50" y1="203.7" x2="315.50" y2="572.8" stroke="#dadada" stroke-width="1"></line><line x1="368.70" y1="182.5" x2="368.70" y2="572.8" stroke="#dadada" stroke-width="1"></line><line x1="422.29" y1="182.5" x2="422.29" y2="572.8" stroke="#dadada" stroke-width="1"></line><line x1="475.88" y1="182.5" x2="475.88" y2="572.8" stroke="#dadada" stroke-width="1"></line><line x1="529.47" y1="182.5" x2="529.47" y2="572.8" stroke="#dadada" stroke-width="1"></line><line x1="583.06" y1="182.5" x2="583.06" y2="572.8" stroke="#dadada" stroke-width="1"></line><line x1="636.65" y1="182.5" x2="636.65" y2="572.8" stroke="#dadada" stroke-width="1"></line><line x1="690.24" y1="182.5" x2="690.24" y2="572.8" stroke="#dadada" stroke-width="1"></line><line x1="743.83" y1="182.5" x2="743.83" y2="572.8" stroke="#dadada" stroke-width="1"></line><line x1="797.42" y1="182.5" x2="797.42" y2="572.8" stroke="#dadada" stroke-width="1"></line><line x1="851.01" y1="182.5" x2="851.01" y2="572.8" stroke="#dadada" stroke-width="1"></line></svg>
<div class="r" style="left:22.30px;top:219.90px;width:345.90px;height:66.98px;background:#f2f2f2;"></div>
<div class="r" style="left:1.30px;top:166.40px;width:858.90px;height:16.10px;background:#e6e6e6;"></div>
<div class="r" style="left:1.30px;top:182.50px;width:21.00px;height:390.30px;background:#e6e6e6;"></div>
<div class="r" style="left:22.30px;top:166.40px;width:293.20px;height:15.60px;background:#d3d3d3;"></div>
<div class="r" style="left:1.30px;top:321.37px;width:21.00px;height:16.75px;background:#d3d3d3;"></div>
<svg class="r" style="left:0;top:0" width="879" height="616"><line x1="315.50" y1="166.4" x2="315.50" y2="182" stroke="#c3c3c3" stroke-width="1"></line><line x1="368.70" y1="166.4" x2="368.70" y2="182" stroke="#c3c3c3" stroke-width="1"></line><line x1="422.29" y1="166.4" x2="422.29" y2="182" stroke="#c3c3c3" stroke-width="1"></line><line x1="475.88" y1="166.4" x2="475.88" y2="182" stroke="#c3c3c3" stroke-width="1"></line><line x1="529.47" y1="166.4" x2="529.47" y2="182" stroke="#c3c3c3" stroke-width="1"></line><line x1="583.06" y1="166.4" x2="583.06" y2="182" stroke="#c3c3c3" stroke-width="1"></line><line x1="636.65" y1="166.4" x2="636.65" y2="182" stroke="#c3c3c3" stroke-width="1"></line><line x1="690.24" y1="166.4" x2="690.24" y2="182" stroke="#c3c3c3" stroke-width="1"></line><line x1="743.83" y1="166.4" x2="743.83" y2="182" stroke="#c3c3c3" stroke-width="1"></line><line x1="797.42" y1="166.4" x2="797.42" y2="182" stroke="#c3c3c3" stroke-width="1"></line><line x1="851.01" y1="166.4" x2="851.01" y2="182" stroke="#c3c3c3" stroke-width="1"></line><line x1="1.3" y1="203.20" x2="22" y2="203.20" stroke="#c3c3c3" stroke-width="1"></line><line x1="1.3" y1="220.40" x2="22" y2="220.40" stroke="#c3c3c3" stroke-width="1"></line><line x1="1.3" y1="237.15" x2="22" y2="237.15" stroke="#c3c3c3" stroke-width="1"></line><line x1="1.3" y1="253.89" x2="22" y2="253.89" stroke="#c3c3c3" stroke-width="1"></line><line x1="1.3" y1="270.63" x2="22" y2="270.63" stroke="#c3c3c3" stroke-width="1"></line><line x1="1.3" y1="287.38" x2="22" y2="287.38" stroke="#c3c3c3" stroke-width="1"></line><line x1="1.3" y1="304.12" x2="22" y2="304.12" stroke="#c3c3c3" stroke-width="1"></line><line x1="1.3" y1="320.87" x2="22" y2="320.87" stroke="#c3c3c3" stroke-width="1"></line><line x1="1.3" y1="337.62" x2="22" y2="337.62" stroke="#c3c3c3" stroke-width="1"></line><line x1="1.3" y1="354.36" x2="22" y2="354.36" stroke="#c3c3c3" stroke-width="1"></line><line x1="1.3" y1="371.11" x2="22" y2="371.11" stroke="#c3c3c3" stroke-width="1"></line><line x1="1.3" y1="387.85" x2="22" y2="387.85" stroke="#c3c3c3" stroke-width="1"></line><line x1="1.3" y1="404.60" x2="22" y2="404.60" stroke="#c3c3c3" stroke-width="1"></line><line x1="1.3" y1="421.34" x2="22" y2="421.34" stroke="#c3c3c3" stroke-width="1"></line><line x1="1.3" y1="438.09" x2="22" y2="438.09" stroke="#c3c3c3" stroke-width="1"></line><line x1="1.3" y1="454.83" x2="22" y2="454.83" stroke="#c3c3c3" stroke-width="1"></line><line x1="1.3" y1="471.58" x2="22" y2="471.58" stroke="#c3c3c3" stroke-width="1"></line><line x1="1.3" y1="488.32" x2="22" y2="488.32" stroke="#c3c3c3" stroke-width="1"></line><line x1="1.3" y1="505.07" x2="22" y2="505.07" stroke="#c3c3c3" stroke-width="1"></line><line x1="1.3" y1="521.81" x2="22" y2="521.81" stroke="#c3c3c3" stroke-width="1"></line><line x1="1.3" y1="538.56" x2="22" y2="538.56" stroke="#c3c3c3" stroke-width="1"></line><line x1="1.3" y1="555.30" x2="22" y2="555.30" stroke="#c3c3c3" stroke-width="1"></line><line x1="1.3" y1="572.05" x2="22" y2="572.05" stroke="#c3c3c3" stroke-width="1"></line><line x1="1.3" y1="181.9" x2="860.2" y2="181.9" stroke="#c3c3c3" stroke-width="1"></line><line x1="22.4" y1="166.4" x2="22.4" y2="572.8" stroke="#c3c3c3" stroke-width="1"></line><line x1="22.3" y1="182" x2="315.5" y2="182" stroke="#217346" stroke-width="2"></line><line x1="21.3" y1="321.37" x2="21.3" y2="338.115" stroke="#217346" stroke-width="2"></line><path d="M9.5 179.5L19 179.5L19 170z" fill="#b8b8b8"></path><line x1="859.7" y1="182" x2="859.7" y2="572.8" stroke="#c6c6c6" stroke-width="1"></line><line x1="1.3" y1="572.3" x2="860.2" y2="572.3" stroke="#c6c6c6" stroke-width="1"></line></svg>
<div class="t " style="left:169.15px;top:170.68px;font-size:10.3px;line-height:10.3px;color:#217346;transform:translateX(-50%);">A</div>
<div class="t " style="left:342.60px;top:170.68px;font-size:10.3px;line-height:10.3px;color:#444;transform:translateX(-50%);">B</div>
<div class="t " style="left:396.00px;top:170.68px;font-size:10.3px;line-height:10.3px;color:#444;transform:translateX(-50%);">C</div>
<div class="t " style="left:449.58px;top:170.68px;font-size:10.3px;line-height:10.3px;color:#444;transform:translateX(-50%);">D</div>
<div class="t " style="left:503.18px;top:170.68px;font-size:10.3px;line-height:10.3px;color:#444;transform:translateX(-50%);">E</div>
<div class="t " style="left:556.76px;top:170.68px;font-size:10.3px;line-height:10.3px;color:#444;transform:translateX(-50%);">F</div>
<div class="t " style="left:610.36px;top:170.68px;font-size:10.3px;line-height:10.3px;color:#444;transform:translateX(-50%);">G</div>
<div class="t " style="left:663.95px;top:170.68px;font-size:10.3px;line-height:10.3px;color:#444;transform:translateX(-50%);">H</div>
<div class="t " style="left:717.53px;top:170.68px;font-size:10.3px;line-height:10.3px;color:#444;transform:translateX(-50%);">I</div>
<div class="t " style="left:771.12px;top:170.68px;font-size:10.3px;line-height:10.3px;color:#444;transform:translateX(-50%);">J</div>
<div class="t " style="left:824.72px;top:170.68px;font-size:10.3px;line-height:10.3px;color:#444;transform:translateX(-50%);">K</div>
<div class="t " style="left:858.50px;top:170.68px;font-size:10.3px;line-height:10.3px;color:#444;"></div>
<div class="t " style="left:11.80px;top:190.26px;font-size:10.8px;line-height:10.8px;color:#333;transform:translateX(-50%);">1</div>
<div class="t " style="left:11.80px;top:207.76px;font-size:10.8px;line-height:10.8px;color:#333;transform:translateX(-50%);">2</div>
<div class="t " style="left:11.80px;top:224.50px;font-size:10.8px;line-height:10.8px;color:#333;transform:translateX(-50%);">3</div>
<div class="t " style="left:11.80px;top:241.25px;font-size:10.8px;line-height:10.8px;color:#333;transform:translateX(-50%);">4</div>
<div class="t " style="left:11.80px;top:257.99px;font-size:10.8px;line-height:10.8px;color:#333;transform:translateX(-50%);">5</div>
<div class="t " style="left:11.80px;top:274.74px;font-size:10.8px;line-height:10.8px;color:#333;transform:translateX(-50%);">6</div>
<div class="t " style="left:11.80px;top:291.48px;font-size:10.8px;line-height:10.8px;color:#333;transform:translateX(-50%);">7</div>
<div class="t " style="left:11.80px;top:308.23px;font-size:10.8px;line-height:10.8px;color:#333;transform:translateX(-50%);">8</div>
<div class="t " style="left:11.80px;top:324.97px;font-size:10.8px;line-height:10.8px;color:#217346;transform:translateX(-50%);">9</div>
<div class="t " style="left:11.80px;top:341.72px;font-size:10.8px;line-height:10.8px;color:#333;transform:translateX(-50%);">10</div>
<div class="t " style="left:11.80px;top:358.46px;font-size:10.8px;line-height:10.8px;color:#333;transform:translateX(-50%);">11</div>
<div class="t " style="left:11.80px;top:375.21px;font-size:10.8px;line-height:10.8px;color:#333;transform:translateX(-50%);">12</div>
<div class="t " style="left:11.80px;top:391.95px;font-size:10.8px;line-height:10.8px;color:#333;transform:translateX(-50%);">13</div>
<div class="t " style="left:11.80px;top:408.70px;font-size:10.8px;line-height:10.8px;color:#333;transform:translateX(-50%);">14</div>
<div class="t " style="left:11.80px;top:425.44px;font-size:10.8px;line-height:10.8px;color:#333;transform:translateX(-50%);">15</div>
<div class="t " style="left:11.80px;top:442.19px;font-size:10.8px;line-height:10.8px;color:#333;transform:translateX(-50%);">16</div>
<div class="t " style="left:11.80px;top:458.93px;font-size:10.8px;line-height:10.8px;color:#333;transform:translateX(-50%);">17</div>
<div class="t " style="left:11.80px;top:475.68px;font-size:10.8px;line-height:10.8px;color:#333;transform:translateX(-50%);">18</div>
<div class="t " style="left:11.80px;top:492.42px;font-size:10.8px;line-height:10.8px;color:#333;transform:translateX(-50%);">19</div>
<div class="t " style="left:11.80px;top:509.17px;font-size:10.8px;line-height:10.8px;color:#333;transform:translateX(-50%);">20</div>
<div class="t " style="left:11.80px;top:525.91px;font-size:10.8px;line-height:10.8px;color:#333;transform:translateX(-50%);">21</div>
<div class="t " style="left:11.80px;top:542.66px;font-size:10.8px;line-height:10.8px;color:#333;transform:translateX(-50%);">22</div>
<div class="t " style="left:11.80px;top:559.40px;font-size:10.8px;line-height:10.8px;color:#333;transform:translateX(-50%);">23</div>
<div class="r" style="left:21.00px;top:320.17px;width:295.30px;height:18.35px;background:none;box-sizing:border-box;border:2px solid #217346;"></div>
<div class="r" style="left:312.60px;top:335.51px;width:5.00px;height:4.80px;background:#217346;"></div>
<div class="t" style="left: 24.8px; top: 188.09px; font-size: 13.6px; line-height: 13.6px; color: rgb(0, 0, 0); font-weight: bold; -webkit-text-stroke: 0px; letter-spacing: 0.023px;">01 - Etes-vous satisfait de l'organisation du cours?</div>
<div class="t" style="left: 24.8px; top: 224.69px; font-size: 11px; line-height: 11px; color: rgb(0, 0, 0); letter-spacing: 0.433px;">Plutôt insatisfait</div>
<div class="t " style="left:366.90px;top:224.69px;font-size:11px;line-height:11px;color:#000;transform:translateX(-100%);">1</div>
<div class="t" style="left: 24.8px; top: 241.32px; font-size: 11px; line-height: 11px; color: rgb(0, 0, 0); letter-spacing: 0.381px;">Plutôt satisfait</div>
<div class="t " style="left:366.90px;top:241.32px;font-size:11px;line-height:11px;color:#000;transform:translateX(-100%);">1</div>
<div class="t" style="left: 24.8px; top: 257.95px; font-size: 11px; line-height: 11px; color: rgb(0, 0, 0); letter-spacing: 0.246px;">Très insatisfait</div>
<div class="t " style="left:366.90px;top:257.95px;font-size:11px;line-height:11px;color:#000;transform:translateX(-100%);">0</div>
<div class="t" style="left: 24.8px; top: 274.58px; font-size: 11px; line-height: 11px; color: rgb(0, 0, 0); letter-spacing: 0.173px;">Très satisfait</div>
<div class="t " style="left:366.90px;top:274.58px;font-size:11px;line-height:11px;color:#000;transform:translateX(-100%);">4</div>
<div class="r" style="left:422.20px;top:220.40px;width:335.60px;height:335.50px;background:#fff;box-sizing:border-box;border:1px solid #d2d2d2;border-radius:11px;"></div>
<div class="t" style="left: 464.6px; top: 231.39px; font-size: 11px; line-height: 11px; color: rgb(80, 80, 80); letter-spacing: 0.069px;">01 - Etes-vous satisfait de l'organisation du cours?</div>
<svg class="r" style="left:0;top:0" width="879" height="616"><defs>
<linearGradient id="gb" x1="0" y1="0" x2="0" y2="1"><stop offset="0" stop-color="#6ba5dd"></stop><stop offset="1" stop-color="#4d8dcc"></stop></linearGradient>
<linearGradient id="go" x1="0" y1="0" x2="0" y2="1"><stop offset="0" stop-color="#f68c48"></stop><stop offset="1" stop-color="#e2660f"></stop></linearGradient>
<linearGradient id="gy" x1="0" y1="0" x2="0" y2="1"><stop offset="0" stop-color="#fdc242"></stop><stop offset="0.35" stop-color="#ffc320"></stop><stop offset="0.7" stop-color="#f8bd00"></stop><stop offset="1" stop-color="#e7b400"></stop></linearGradient>
<filter id="sh" x="-10%" y="-10%" width="120%" height="120%"><feGaussianBlur stdDeviation="1.1"></feGaussianBlur></filter>
</defs>
<circle cx="539.8" cy="401.6" r="105.6" fill="rgba(0,0,0,0.35)" filter="url(#sh)"></circle>
<path d="M539.8,400.0 L539.80,294.70 A105.3,105.3 0 0 1 630.99,347.35 Z" fill="url(#gb)"></path>
<path d="M539.8,400.0 L630.99,347.35 A105.3,105.3 0 0 1 630.99,452.65 Z" fill="url(#go)"></path>
<path d="M539.8,400.0 L630.99,452.65 A105.3,105.3 0 1 1 539.80,294.70 Z" fill="url(#gy)"></path>
</svg>
<div class="t " style="left:566.00px;top:344.10px;font-size:9.8px;line-height:9.8px;color:#222;transform:translateX(-50%);">1</div>
<div class="t " style="left:566.00px;top:357.10px;font-size:9.8px;line-height:9.8px;color:#222;transform:translateX(-50%);">16%</div>
<div class="t " style="left:592.00px;top:390.10px;font-size:9.8px;line-height:9.8px;color:#222;transform:translateX(-50%);">1</div>
<div class="t " style="left:592.00px;top:403.10px;font-size:9.8px;line-height:9.8px;color:#222;transform:translateX(-50%);">17%</div>
<div class="t " style="left:584.50px;top:416.10px;font-size:9.8px;line-height:9.8px;color:#222;transform:translateX(-50%);">0</div>
<div class="t " style="left:585.00px;top:429.10px;font-size:9.8px;line-height:9.8px;color:#222;transform:translateX(-50%);">0%</div>
<div class="t " style="left:493.30px;top:416.10px;font-size:9.8px;line-height:9.8px;color:#222;transform:translateX(-50%);">4</div>
<div class="t " style="left:493.30px;top:429.10px;font-size:9.8px;line-height:9.8px;color:#222;transform:translateX(-50%);">67%</div>
<div class="r" style="left:657.30px;top:359.40px;width:92.20px;height:81.50px;background:#fff;box-sizing:border-box;border:1px solid #d0d0d0;"></div>
<div class="r" style="left:663.00px;top:366.90px;width:5.80px;height:5.80px;background:#5b9bd5;"></div>
<div class="t" style="left: 671.9px; top: 366.13px; font-size: 10px; line-height: 10px; color: rgb(80, 80, 80); letter-spacing: 0.18px;">Plutôt insatisfait</div>
<div class="r" style="left:663.00px;top:386.97px;width:5.80px;height:5.80px;background:#ed7d31;"></div>
<div class="t" style="left: 671.9px; top: 386.2px; font-size: 10px; line-height: 10px; color: rgb(80, 80, 80); letter-spacing: 0.176px;">Plutôt satisfait</div>
<div class="r" style="left:663.00px;top:407.04px;width:5.80px;height:5.80px;background:#a5a5a5;"></div>
<div class="t" style="left: 671.9px; top: 406.27px; font-size: 10px; line-height: 10px; color: rgb(80, 80, 80); letter-spacing: 0.054px;">Très insatisfait</div>
<div class="r" style="left:663.00px;top:427.11px;width:5.80px;height:5.80px;background:#ffc000;"></div>
<div class="t" style="left: 671.9px; top: 426.34px; font-size: 10px; line-height: 10px; color: rgb(80, 80, 80); letter-spacing: 0.037px;">Très satisfait</div>
<div class="r" style="left:1.30px;top:573.00px;width:876.40px;height:23.50px;background:#e6e6e6;"></div>
<svg class="r" style="left:22px;top:580px;" width="6" height="9" viewBox="0 0 6 9"><path d="M5 0.5v8L0.8 4.5z" fill="#c0c0c0"></path></svg>
<svg class="r" style="left:46px;top:580px;" width="6" height="9" viewBox="0 0 6 9"><path d="M1 0.5v8L5.2 4.5z" fill="#217346"></path></svg>
<div class="r" style="left:85.00px;top:576.80px;width:1.00px;height:16.00px;background:#c6c6c6;"></div>
<div class="t" style="left: 96.2px; top: 580.29px; font-size: 11px; line-height: 11px; color: rgb(68, 68, 68); letter-spacing: -0.088px;">Sondage myTeacher</div>
<div class="r" style="left:208.50px;top:572.80px;width:75.00px;height:21.20px;background:#fff;box-shadow:1px 0 1px rgba(0,0,0,0.15);"></div>
<div class="r" style="left:208.50px;top:592.20px;width:75.00px;height:2.00px;background:#217346;"></div>
<div class="t" style="left: 218.4px; top: 580.29px; font-size: 11px; line-height: 11px; color: rgb(33, 115, 70); font-weight: bold; letter-spacing: -0.113px;">question 1</div>
<div class="t" style="left: 295px; top: 580.29px; font-size: 11px; line-height: 11px; color: rgb(68, 68, 68); letter-spacing: -0.041px;">question 2</div>
<div class="r" style="left:357.20px;top:576.80px;width:1.00px;height:16.00px;background:#c6c6c6;"></div>
<div class="t" style="left: 369.7px; top: 580.29px; font-size: 11px; line-height: 11px; color: rgb(68, 68, 68); letter-spacing: -0.052px;">question 3</div>
<div class="r" style="left:432.30px;top:576.80px;width:1.00px;height:16.00px;background:#c6c6c6;"></div>
<div class="t" style="left: 444px; top: 580.29px; font-size: 11px; line-height: 11px; color: rgb(68, 68, 68); letter-spacing: -0.23px;">quest</div>
<div class="t" style="left: 477px; top: 580.29px; font-size: 11px; line-height: 11px; color: rgb(33, 115, 70); font-weight: bold; letter-spacing: -0.086px;">...</div>
<svg class="r" style="left:496px;top:577px;" width="16" height="16" viewBox="0 0 16 16"><circle cx="7.8" cy="8.4" r="6.3" fill="none" stroke="#777" stroke-width="1.1"></circle><path d="M7.8 4.8v7.2M4.2 8.4h7.2" stroke="#666" stroke-width="1.5"></path></svg>
<div class="r" style="left:527.80px;top:581.00px;width:1.20px;height:1.20px;background:#a0a0a0;"></div>
<div class="r" style="left:527.80px;top:585.00px;width:1.20px;height:1.20px;background:#a0a0a0;"></div>
<div class="r" style="left:527.80px;top:589.00px;width:1.20px;height:1.20px;background:#a0a0a0;"></div>
<div class="r" style="left:541.80px;top:579.60px;width:306.20px;height:12.00px;background:#d7d7d7;"></div>
<div class="r" style="left:541.80px;top:579.60px;width:12.00px;height:12.00px;background:#fff;box-sizing:border-box;border:1px solid #c6c6c6;"></div>
<svg class="r" style="left:545px;top:582px;" width="6" height="8" viewBox="0 0 6 8"><path d="M4.5 0.5v6.5L1 3.8z" fill="#666"></path></svg>
<div class="r" style="left:553.80px;top:579.60px;width:268.80px;height:12.00px;background:#fff;box-sizing:border-box;border:1px solid #c6c6c6;"></div>
<div class="r" style="left:848.00px;top:579.60px;width:12.20px;height:12.00px;background:#fff;box-sizing:border-box;border:1px solid #c6c6c6;"></div>
<svg class="r" style="left:852px;top:582px;" width="6" height="8" viewBox="0 0 6 8"><path d="M1 0.5v6.5L4.5 3.8z" fill="#666"></path></svg>
<div class="r" style="left:863.00px;top:168.30px;width:12.50px;height:404.50px;background:#d7d7d7;"></div>
<div class="r" style="left:863.00px;top:168.30px;width:12.50px;height:12.00px;background:#fff;box-sizing:border-box;border:1px solid #c6c6c6;"></div>
<svg class="r" style="left:865px;top:171px;" width="9" height="6" viewBox="0 0 9 6"><path d="M0.8 5h7.5L4.5 1z" fill="#666"></path></svg>
<div class="r" style="left:863.00px;top:180.00px;width:12.50px;height:350.00px;background:#fff;box-sizing:border-box;border:1px solid #c6c6c6;"></div>
<div class="r" style="left:863.00px;top:561.50px;width:12.50px;height:11.50px;background:#fff;box-sizing:border-box;border:1px solid #c6c6c6;"></div>
<svg class="r" style="left:865px;top:564px;" width="9" height="6" viewBox="0 0 9 6"><path d="M0.8 1h7.5L4.5 5z" fill="#666"></path></svg>
<div class="r" style="left:1.30px;top:596.50px;width:876.40px;height:17.70px;background:#f3f3f3;"></div>
<div class="r" style="left:1.30px;top:596.50px;width:876.40px;height:1.00px;background:#dadada;"></div>
<div class="t" style="left: 6.8px; top: 601.01px; font-size: 10.5px; line-height: 10.5px; color: rgb(85, 85, 85); letter-spacing: -0.3px; transform: scaleX(0.8822); transform-origin: 0px 0px;">Prêt</div>
<div class="t" style="left: 37px; top: 601.01px; font-size: 10.5px; line-height: 10.5px; color: rgb(85, 85, 85); letter-spacing: -0.3px; transform: scaleX(0.9334); transform-origin: 0px 0px;">Calculer</div>
<svg class="r" style="left:87px;top:599px;" width="13" height="13" viewBox="0 0 13 13"><circle cx="3" cy="3" r="2.3" fill="#666"></circle><rect x="5.5" y="1" width="6.5" height="3" fill="#666"></rect><rect x="1" y="5" width="11" height="7.5" fill="none" stroke="#777" stroke-width="0.9"></rect><path d="M4 6v6M7 6v6M10 6v6M1 8.5h11M1 10.5h11" stroke="#999" stroke-width="0.6"></path></svg>
<div class="r" style="left:624.80px;top:597.20px;width:31.00px;height:17.50px;background:#d3d3d3;"></div>
<svg class="r" style="left:633px;top:599px;" width="14" height="13" viewBox="0 0 14 13"><rect x="1.8" y="1.6" width="10.6" height="9.8" fill="none" stroke="#666" stroke-width="1.2"></rect><path d="M5.3 1.6v9.8M8.9 1.6v9.8M1.8 4.9h10.6M1.8 8.2h10.6" stroke="#666" stroke-width="1.1"></path></svg>
<svg class="r" style="left:665px;top:599px;" width="14" height="13" viewBox="0 0 14 13"><rect x="1" y="1" width="11.5" height="10.5" fill="none" stroke="#666" stroke-width="1.1"></rect><rect x="3.8" y="2.8" width="6" height="7" fill="none" stroke="#888" stroke-width="0.8"></rect><path d="M5 4.5h3.5M5 8h3.5" stroke="#888" stroke-width="0.8"></path></svg>
<svg class="r" style="left:697px;top:599px;" width="14" height="13" viewBox="0 0 14 13"><path d="M1 1h11.5v10.5H1z M1 6.5h11.5 M4.8 1v5.5 M8.6 1v5.5" fill="none" stroke="#666" stroke-width="1.1"></path></svg>
<div class="r" style="left:724.30px;top:605.00px;width:5.00px;height:1.80px;background:#555;"></div>
<div class="r" style="left:732.40px;top:605.40px;width:83.20px;height:1.00px;background:#8a8a8a;"></div>
<div class="r" style="left:772.80px;top:601.00px;width:3.00px;height:8.50px;background:#555;"></div>
<svg class="r" style="left:818.5px;top:600px;" width="9" height="10" viewBox="0 0 9 10"><path d="M4.2 1v8M0.5 5h7.5" stroke="#555" stroke-width="1.8"></path></svg>
<div class="t" style="left: 840px; top: 601.01px; font-size: 10.5px; line-height: 10.5px; color: rgb(85, 85, 85); letter-spacing: -0.3px; transform: scaleX(0.8668); transform-origin: 0px 0px;">100%</div>
</body></html>
